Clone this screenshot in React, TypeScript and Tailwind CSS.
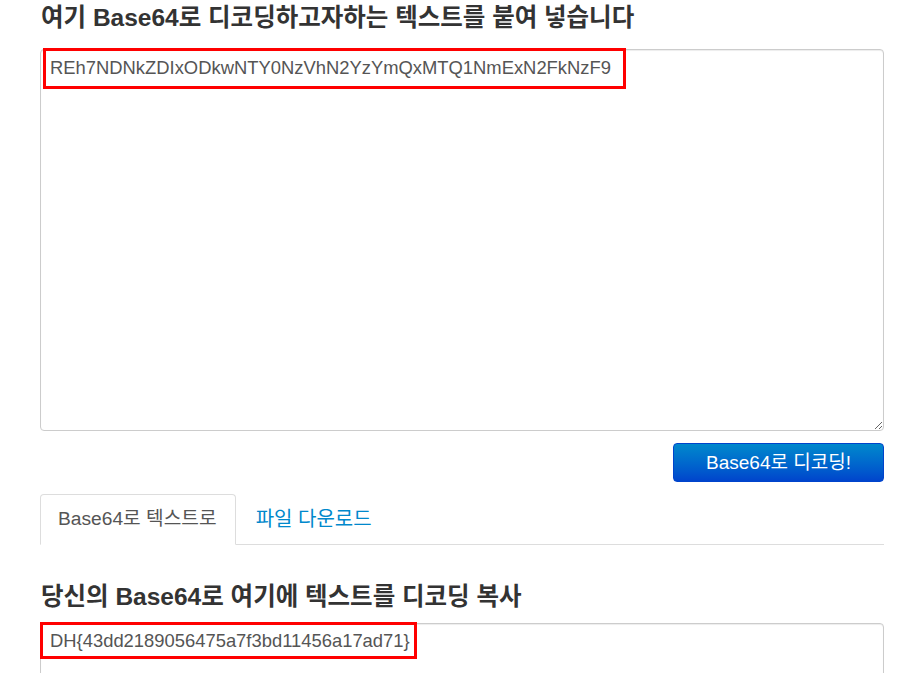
import React from "react";

const font = { fontFamily: '"Liberation Sans", "Noto Sans CJK KR", sans-serif' };

export default function App() {
  return (
    <div className="bg-white min-h-[673px] text-[#333]" style={font}>
      <div className="ml-[40px] w-[844px] pt-[4px]">
        <h3 className="text-[24.5px] font-bold leading-[28px] m-0 pl-[1px]">
          여기 Base64로 디코딩하고자하는 텍스트를 붙여 넣습니다
        </h3>
        <div className="relative mt-[17px]">
          <textarea
            readOnly
            defaultValue="REh7NDNkZDIxODkwNTY0NzVhN2YzYmQxMTQ1NmExN2FkNzF9"
            className="block w-full h-[382px] border border-[#ccc] rounded-[4px] px-[9px] py-[6px] text-[18.4px] leading-[24px] text-[#555] outline-none resize-y shadow-[inset_0_1px_1px_rgba(0,0,0,0.075)]"
            style={font}
          />
          <div className="absolute left-[3px] top-[-1px] w-[583px] h-[41px] border-[3px] border-[#ff0000] pointer-events-none" />
        </div>
        <div className="flex justify-end mt-[12px]">
          <button className="w-[211px] h-[39px] rounded-[4px] border border-[#0044cc] bg-linear-to-b from-[#0088cc] to-[#0044cc] text-white text-[19px] leading-[22px]">
            Base64로 디코딩!
          </button>
        </div>
        <div className="flex mt-[12px] border-b border-[#ddd]">
          <div className="h-[51px] -mb-[1px] pl-[17px] pr-[18px] flex items-center border border-[#ddd] border-b-white rounded-t-[4px] bg-white text-[#555] text-[19.2px]">
            Base64로 텍스트로
          </div>
          <div className="h-[50px] px-[20px] flex items-center text-[#0088cc] text-[20px]">
            파일 다운로드
          </div>
        </div>
        <h3 className="text-[24.5px] font-bold leading-[28px] mt-[38px] m-0 pl-[1px]">
          당신의 Base64로 여기에 텍스트를 디코딩 복사
        </h3>
        <div className="relative mt-[12px]">
          <textarea
            readOnly
            defaultValue="DH{43dd2189056475a7f3bd11456a17ad71}"
            className="block w-full h-[100px] border border-[#ccc] rounded-[4px] px-[9px] py-[5px] text-[18.4px] leading-[24px] text-[#555] outline-none resize-y shadow-[inset_0_1px_1px_rgba(0,0,0,0.075)]"
            style={font}
          />
          <div className="absolute left-0 top-[-1px] w-[377px] h-[37px] border-[3px] border-[#ff0000] pointer-events-none" />
        </div>
      </div>
    </div>
  );
}
